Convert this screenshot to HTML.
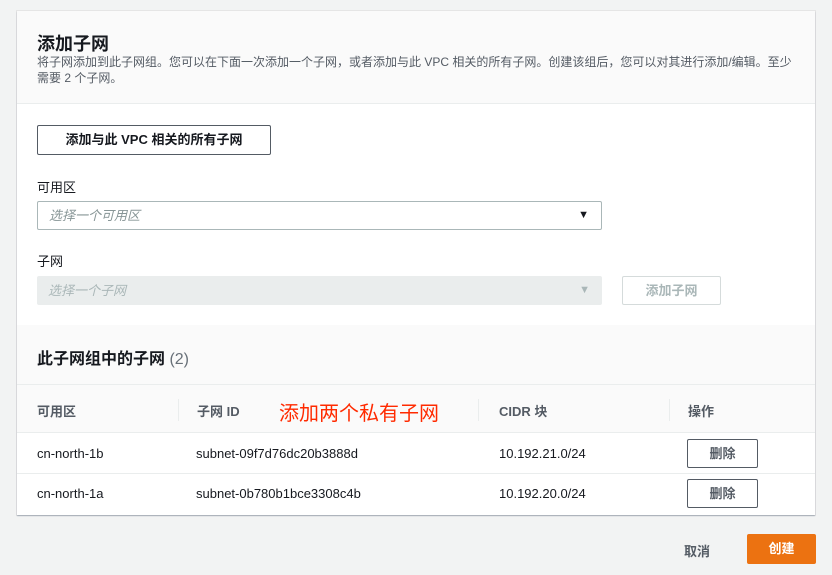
<!DOCTYPE html>
<html><head><meta charset="utf-8"><style>
*{box-sizing:border-box;margin:0;padding:0}
body{width:832px;height:575px;background:#f2f3f3;font-family:"Liberation Sans","Noto Sans CJK SC",sans-serif;color:#16191f;position:relative;overflow:hidden;font-size:13px}
.card{position:absolute;left:17px;top:11px;width:798px;height:504px;background:#fff;box-shadow:0 1px 1px rgba(0,31,63,.3),0 0 0 1px #e5e5e5}
.abs{position:absolute}
.btn{position:absolute;border:1px solid #545b64;border-radius:2px;background:#fff;font-weight:bold;color:#545b64;font-size:13px;text-align:center}
</style></head><body>
<div class="card">
 <div class="abs" style="left:0;top:0;width:798px;height:93px;background:#fafafa;border-bottom:1px solid #eaeded"></div>
 <div class="abs" style="left:20px;top:19px;font-size:18px;font-weight:bold">添加子网</div>
 <div class="abs" style="left:20px;top:43px;width:760px;font-size:12px;line-height:16px;color:#545b64">将子网添加到此子网组。您可以在下面一次添加一个子网，或者添加与此 VPC 相关的所有子网。创建该组后，您可以对其进行添加/编辑。至少需要 2 个子网。</div>
 <div class="btn" style="left:20px;top:114px;width:234px;height:30px;line-height:28px;color:#16191f">添加与此 VPC 相关的所有子网</div>
 <div class="abs" style="left:20px;top:166px;font-size:13px">可用区</div>
 <div class="abs" style="left:20px;top:190px;width:565px;height:29px;border:1px solid #aab7b8;border-radius:2px;padding-left:11px;line-height:27px;font-style:italic;color:#879596">选择一个可用区<span style="position:absolute;right:12px;top:0;font-style:normal;color:#16191f;font-size:11px">▼</span></div>
 <div class="abs" style="left:20px;top:240px;font-size:13px">子网</div>
 <div class="abs" style="left:20px;top:265px;width:565px;height:29px;background:#eaeded;border-radius:2px;padding-left:11px;line-height:29px;font-style:italic;color:#aab7b8">选择一个子网<span style="position:absolute;right:12px;top:0;font-style:normal;font-size:11px">▼</span></div>
 <div class="btn" style="left:605px;top:265px;width:99px;height:29px;line-height:27px;border-color:#d5dbdb;color:#aab7b8">添加子网</div>
 <div class="abs" style="left:0;top:314px;width:798px;height:108px;background:#fafafa;border-bottom:1px solid #eaeded"></div>
 <div class="abs" style="left:20px;top:334px;font-size:16px;font-weight:bold">此子网组中的子网 <span style="color:#687078;font-weight:normal">(2)</span></div>
 <div class="abs" style="left:0;top:373px;width:798px;border-top:1px solid #eaeded"></div>
 <div class="abs" style="left:161px;top:388px;height:22px;border-left:1px solid #eaeded"></div>
 <div class="abs" style="left:461px;top:388px;height:22px;border-left:1px solid #eaeded"></div>
 <div class="abs" style="left:652px;top:388px;height:22px;border-left:1px solid #eaeded"></div>
 <div class="abs" style="left:20px;top:390px;font-weight:bold;color:#545b64">可用区</div>
 <div class="abs" style="left:180px;top:390px;font-weight:bold;color:#545b64">子网 ID</div>
 <div class="abs" style="left:262px;top:386px;font-size:20px;color:#ff2a00">添加两个私有子网</div>
 <div class="abs" style="left:482px;top:390px;font-weight:bold;color:#545b64">CIDR 块</div>
 <div class="abs" style="left:671px;top:390px;font-weight:bold;color:#545b64">操作</div>
 <div class="abs" style="left:0;top:462px;width:798px;border-top:1px solid #eaeded"></div>
 <div class="abs" style="left:20px;top:435px">cn-north-1b</div>
 <div class="abs" style="left:179px;top:435px">subnet-09f7d76dc20b3888d</div>
 <div class="abs" style="left:482px;top:435px">10.192.21.0/24</div>
 <div class="btn" style="left:670px;top:428px;width:71px;height:29px;line-height:27px">删除</div>
 <div class="abs" style="left:20px;top:475px">cn-north-1a</div>
 <div class="abs" style="left:179px;top:475px">subnet-0b780b1bce3308c4b</div>
 <div class="abs" style="left:482px;top:475px">10.192.20.0/24</div>
 <div class="btn" style="left:670px;top:468px;width:71px;height:29px;line-height:27px">删除</div>
</div>
<div class="abs" style="left:684px;top:541px;font-weight:bold;color:#545b64">取消</div>
<div class="abs" style="left:747px;top:534px;width:69px;height:30px;background:#ec7211;border-radius:2px;color:#fff;font-weight:bold;text-align:center;line-height:30px">创建</div>
</body></html>
